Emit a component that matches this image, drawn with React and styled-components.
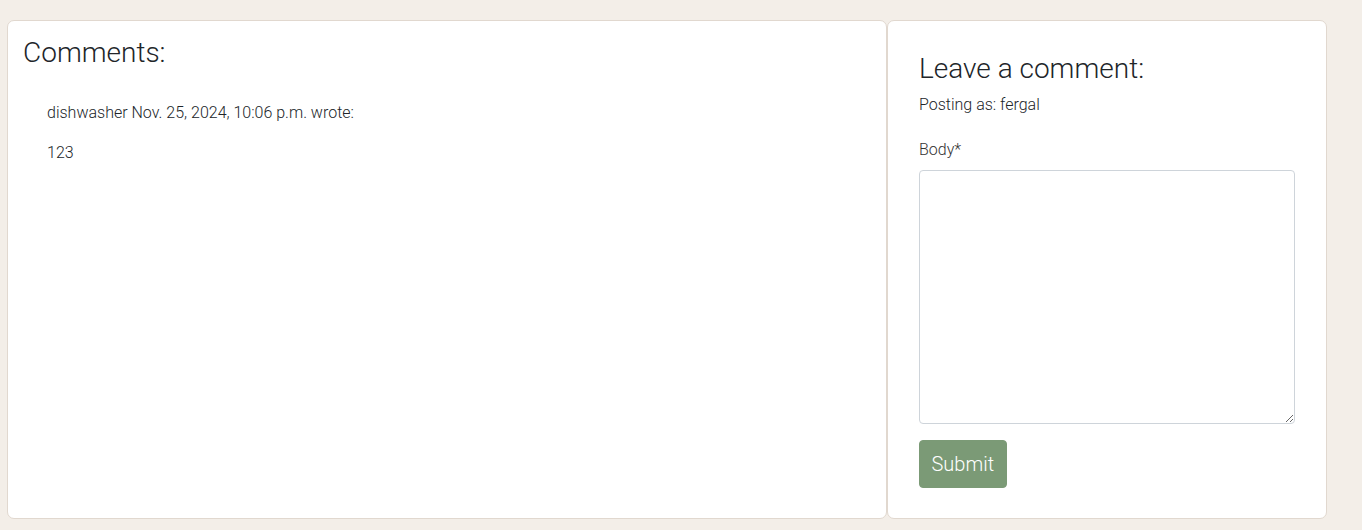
import React from 'react';
import styled, { createGlobalStyle } from 'styled-components';

// ----- style -----

const GlobalStyle = createGlobalStyle`
    body {
        margin: 0;
        background: #f3eee8;
        font-family: Roboto, "Liberation Sans", sans-serif;
        font-weight: 300;
        color: #212529;
    }
`
const Page = styled.div`
    padding: 20px 0 10px 7px;
`
const Row = styled.div`
    display: flex;
    align-items: stretch;
    width: 1320px;
`
const Card = styled.div`
    box-sizing: border-box;
    flex: 0 0 ${props => props.width}px;
    background: #fff;
    border: 1px solid #e1d8cf;
    border-radius: 7px;
    padding: ${props => props.pad};
    display: flex;
    flex-direction: column;
`
const Heading = styled.h3`
    margin: 0;
    font-size: 28px;
    font-weight: 300;
    line-height: 1.2;
    color: #212529;
`
const CommentBlock = styled.div`
    padding: 31px 24px 0;
`
const Text = styled.p`
    margin: ${props => props.top || 0}px 0 ${props => props.gap || 0}px;
    font-size: 16px;
    line-height: 24px;
`
const Form = styled.form`
    display: flex;
    flex-direction: column;
    align-items: flex-start;
`
const Label = styled.label`
    font-size: 16px;
    line-height: 24px;
    margin: 21px 0 8px;
    color: #333;
`
const TextArea = styled.textarea`
    box-sizing: border-box;
    width: 376px;
    height: 254px;
    border: 1px solid #ced4da;
    border-radius: 4px;
    resize: vertical;
    font-family: inherit;
    font-size: 16px;
    margin: 0 0 16px;
    padding: 6px 12px;
`
const Button = styled.button`
    height: 48px;
    padding: 0 11.5px;
    background: #7b9a76;
    border: 1px solid #7b9a76;
    border-radius: 4px;
    color: #ffffff;
    font-family: inherit;
    font-weight: 300;
    font-size: 20px;
    cursor: pointer;
`

// ----- component -----

export default function App() {
    return (
        <Page>
            <GlobalStyle />
            <Row>
                <Card width={880} pad="15px 15px">
                    <Heading>Comments:</Heading>
                    <CommentBlock>
                        <Text gap={16}>dishwasher Nov. 25, 2024, 10:06 p.m. wrote:</Text>
                        <Text>123</Text>
                    </CommentBlock>
                </Card>
                <Card width={440} pad="31px 31px 30px">
                    <Heading>Leave a comment:</Heading>
                    <Text top={7}>Posting as: fergal</Text>
                    <Form onSubmit={e => e.preventDefault()}>
                        <Label htmlFor="body">Body*</Label>
                        <TextArea id="body" />
                        <Button type="submit">Submit</Button>
                    </Form>
                </Card>
            </Row>
        </Page>
    );
}
